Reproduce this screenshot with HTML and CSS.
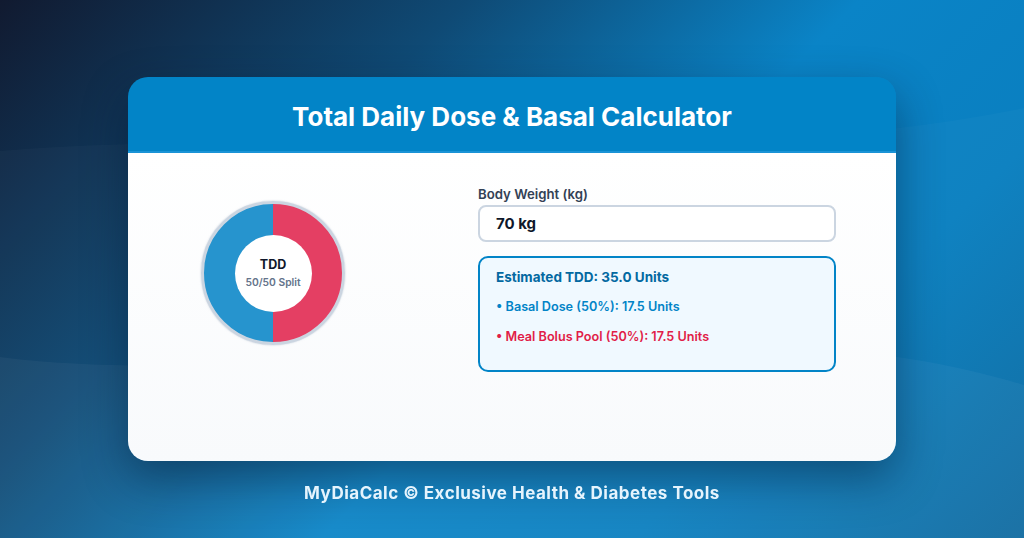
FILE: index.html
```html
<!DOCTYPE html>
<html lang="en">
<head>
<meta charset="utf-8">
<title>Total Daily Dose &amp; Basal Calculator</title>
<link rel="stylesheet" href="styles.css">
</head>
<body>
<svg class="waves" viewBox="0 0 1024 538" preserveAspectRatio="none" aria-hidden="true">
  <path class="wave wave-back" d="M0,151 C300,125 700,175 1024,108 L1024,538 L0,538 Z"/>
  <path class="wave wave-front" d="M0,357 C220,385 480,335 700,340 C850,345 950,362 1024,385 L1024,538 L0,538 Z"/>
</svg>

<main class="page">
  <section class="card">
    <header class="card-header">
      <h1 class="card-title">Total Daily Dose &amp; Basal Calculator</h1>
    </header>

    <div class="card-body">
      <div class="chart-col">
        <div class="donut">
          <div class="donut-hole">
            <span class="donut-title">TDD</span>
            <span class="donut-sub">50/50 Split</span>
          </div>
        </div>
      </div>

      <div class="form-col">
        <label class="field-label" for="weight">Body Weight (kg)</label>
        <div class="field-input" id="weight">70 kg</div>

        <div class="result">
          <p class="result-total">Estimated TDD: 35.0 Units</p>
          <p class="result-line basal">• Basal Dose (50%): 17.5 Units</p>
          <p class="result-line bolus">• Meal Bolus Pool (50%): 17.5 Units</p>
        </div>
      </div>
    </div>
  </section>

  <footer class="brand">MyDiaCalc © Exclusive Health &amp; Diabetes Tools</footer>
</main>
</body>
</html>
```

FILE: styles.css
```css
* {
  box-sizing: border-box;
}

html, body {
  margin: 0;
  height: 100%;
}

body {
  font-family: Inter, "Noto Sans", "Liberation Sans", sans-serif;
  background: linear-gradient(135deg, #111a30 0%, #0f4a75 30%, #0a84c7 55%, #0a7fc0 75%, #0e6aa0 100%);
  overflow: hidden;
  position: relative;
}

/* decorative background swells */
.waves {
  position: fixed;
  inset: 0;
  width: 100%;
  height: 100%;
  z-index: 0;
}

.wave {
  fill: #ffffff;
}

.wave-back {
  opacity: 0.025;
}

.wave-front {
  opacity: 0.04;
}

.page {
  position: relative;
  z-index: 1;
  display: flex;
  flex-direction: column;
  align-items: center;
  padding-top: 77px;
}

.card {
  width: 768px;
  height: 384px;
  border-radius: 20px;
  overflow: hidden;
  display: flex;
  flex-direction: column;
  box-shadow: 0 18px 45px rgba(2, 20, 45, 0.45);
}

.card-header {
  background: #0284c7;
  height: 76px;
  border-bottom: 2px solid #1a93d6;
  display: flex;
  align-items: center;
  justify-content: center;
  padding-top: 5px;
}

.card-title {
  margin: 0;
  color: #ffffff;
  font-size: 26px;
  font-weight: 700;
}

.card-body {
  flex: 1;
  background: linear-gradient(180deg, #ffffff 0%, #f8fafc 100%);
  display: grid;
  grid-template-columns: 170px 358px;
  column-gap: 120px;
  padding: 31px 60px 0;
  align-items: start;
}

.chart-col {
  display: flex;
  justify-content: center;
  padding-top: 17px;
}

.donut {
  width: 144px;
  height: 144px;
  border-radius: 50%;
  border: 3px solid #cbd5e1;
  background: conic-gradient(#e43f63 0deg 180deg, #2694ce 180deg 360deg);
  display: flex;
  align-items: center;
  justify-content: center;
  box-shadow: 0 0 2px rgba(148, 163, 184, 0.6);
}

.donut-hole {
  width: 77px;
  height: 77px;
  border-radius: 50%;
  background: #ffffff;
  display: flex;
  flex-direction: column;
  align-items: center;
  justify-content: center;
  gap: 3px;
}

.donut-title {
  font-size: 12.5px;
  font-weight: 700;
  color: #0f172a;
  line-height: 15px;
}

.donut-sub {
  font-size: 10.3px;
  font-weight: 600;
  color: #64748b;
  line-height: 14px;
}

.form-col {
  display: flex;
  flex-direction: column;
}

.field-label {
  font-size: 13.2px;
  font-weight: 600;
  color: #334155;
  line-height: 20px;
  margin-bottom: 1px;
}

.field-input {
  height: 37px;
  border: 2px solid #cbd5e1;
  border-radius: 8px;
  background: #ffffff;
  padding: 0 16px;
  display: flex;
  align-items: center;
  font-size: 15px;
  font-weight: 700;
  color: #0f172a;
}

.result {
  margin-top: 14px;
  height: 116px;
  border: 2px solid #0284c7;
  border-radius: 10px;
  background: #f0f9ff;
  padding: 8px 16px 0;
}

.result p {
  margin: 0;
}

.result-total {
  font-size: 13.5px;
  font-weight: 700;
  color: #0369a1;
  line-height: 22px;
}

.result-line {
  font-size: 12.65px;
  font-weight: 600;
  line-height: 20px;
  margin-top: 9px !important;
}

.result-line.bolus {
  margin-top: 10px !important;
}

.basal {
  color: #0284c7;
}

.bolus {
  color: #e11d48;
}

.brand {
  margin-top: 21px;
  font-size: 17px;
  font-weight: 700;
  color: #e6f4fd;
  line-height: 22px;
  letter-spacing: 0.5px;
}
```
